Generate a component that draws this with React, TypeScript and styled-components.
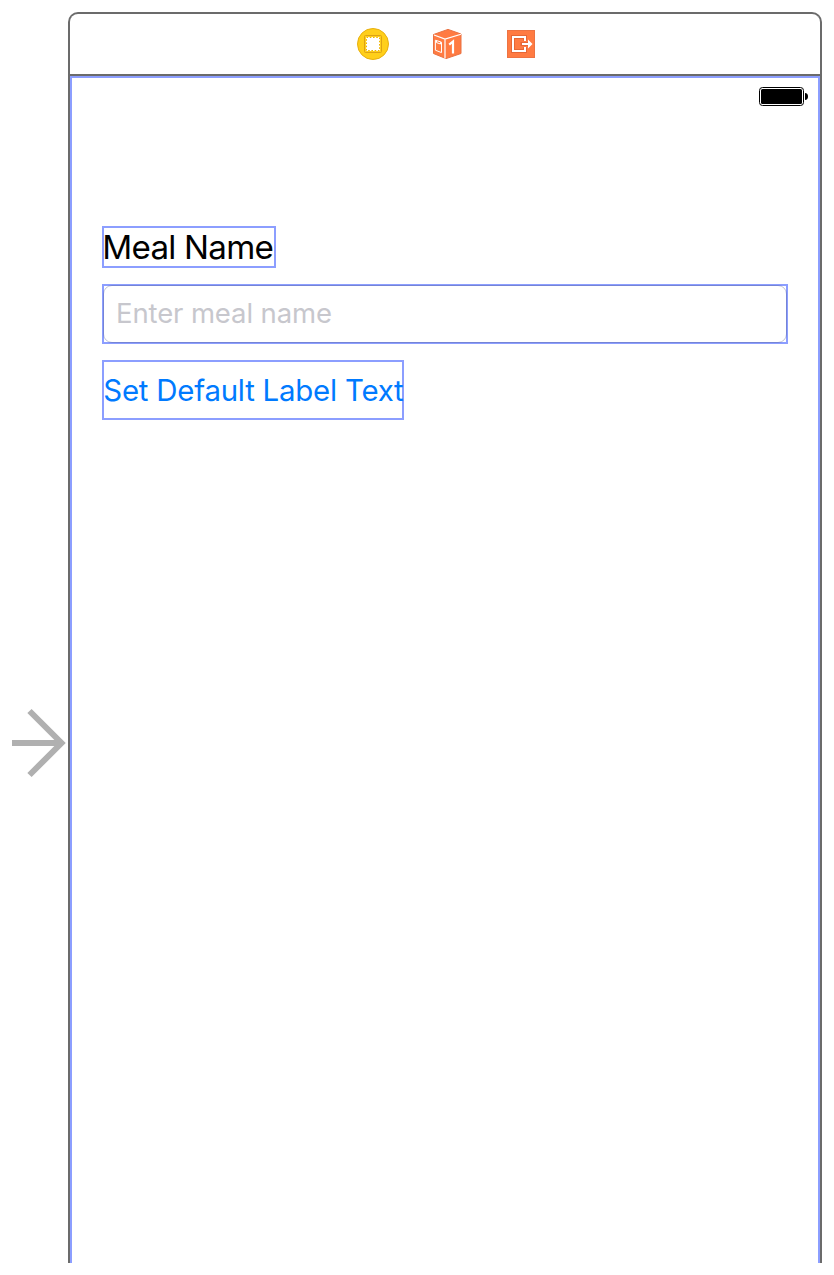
import React from "react";
import styled, { createGlobalStyle } from "styled-components";

const GlobalStyle = createGlobalStyle`
  * { box-sizing: border-box; }
  body { margin: 0; background: #fff; }
`;

const Canvas = styled.main`
  display: flex;
  width: 834px;
  height: 1275px;
  padding: 12px 12px 12px 0;
  background: #fff;
  font-family: Inter, "Liberation Sans", sans-serif;
  overflow: hidden;
`;

const EntryGutter = styled.div`
  width: 68px;
  padding: 696px 0 0 10px;
  svg { display: block; }
`;

const Scene = styled.section`
  display: flex;
  flex-direction: column;
  width: 754px;
  height: 1251px;
  border: 2px solid #6b6b6b;
  border-bottom: 0;
  border-radius: 10px 10px 0 0;
`;

const Dock = styled.header`
  display: flex;
  justify-content: center;
  gap: 38px;
  height: 62px;
  padding: 12px 0 0 4px;
  border-bottom: 2px solid #6b6b6b;
`;

const DockIcon = styled.svg`
  width: 36px;
  height: 36px;
`;

const ViewArea = styled.div`
  flex: 1;
  border: 2px solid #8c9eff;
  border-bottom: 0;
`;

const StatusBar = styled.div`
  display: flex;
  justify-content: flex-end;
  height: 40px;
  padding: 9px 10px 0 0;
`;

const Form = styled.div`
  display: flex;
  flex-direction: column;
  align-items: flex-start;
  gap: 16px;
  padding: 108px 30px 0;
`;

const Outlined = styled.div`
  border: 2px solid #8c9eff;
  white-space: nowrap;
`;

const MealLabel = styled(Outlined)`
  width: 174px;
  height: 42px;
  font-size: 33.2px;
  line-height: 39px;
  letter-spacing: -0.77px;
  text-indent: -1.7px;
  color: #000;
`;

const FieldOutline = styled(Outlined)`
  position: relative;
  width: 686px;
  height: 60px;
  &::after {
    content: "";
    position: absolute;
    inset: -1px;
    border: 1px solid rgba(70, 80, 130, 0.33);
    border-radius: 9px;
    pointer-events: none;
  }
`;

const MealInput = styled.input`
  display: block;
  width: 100%;
  height: 53px;
  padding: 0 12px;
  border: 0;
  outline: 0;
  background: transparent;
  font: 400 27.5px Inter, "Liberation Sans", sans-serif;
  letter-spacing: -0.12px;
  &::placeholder { color: #c7c7cd; opacity: 1; }
`;

const DefaultButton = styled.button`
  width: 302px;
  height: 60px;
  padding: 2px 0 0;
  border: 2px solid #8c9eff;
  background: transparent;
  font: 400 29.4px/54px Inter, "Liberation Sans", sans-serif;
  letter-spacing: -0.22px;
  text-indent: -0.7px;
  text-align: left;
  white-space: nowrap;
  color: #007aff;
`;

const EntryArrow = () => (
  <svg width="58" height="72" viewBox="10 708 58 72" fill="none" stroke="#b0b0b0" strokeWidth="6">
    <path d="M12 743H61M29.5 711L61.5 743L29.5 775" />
  </svg>
);

const ControllerIcon = () => (
  <DockIcon viewBox="355 26 36 36">
    <circle cx="373" cy="44" r="15.5" fill="#ffcf1a" stroke="#e8b010" />
    <rect x="364.5" y="35.5" width="17" height="17" rx="1" fill="#ffcf1a" stroke="#dda215" />
    <rect x="366" y="37" width="14" height="14" fill="#fff" />
    <rect x="366.5" y="37.5" width="13" height="13" fill="none" stroke="#efb400" strokeDasharray="1.6 1.65" />
  </DockIcon>
);

const ResponderIcon = () => (
  <DockIcon viewBox="429 26 36 36">
    <path d="M433.5 34.5L448 29.4L461 34V53.5L446 58.6L433.5 53.5Z" fill="#ff7b42" stroke="#e97040" strokeLinejoin="round" />
    <path d="M434 35L445 39.1L461 34.3M445 39.1V58.5" fill="none" stroke="#fff" strokeWidth="1.2" />
    <path d="M435.4 40.2L441.5 42.2V52.6L435.4 50.2ZM436.5 40.7V42.6L440.5 44V42.1" fill="none" stroke="#fff" />
    <path d="M449.2 44.7L453 41.5V53.5" fill="none" stroke="#fff" strokeWidth="2.2" />
  </DockIcon>
);

const ExitIcon = () => (
  <DockIcon viewBox="503 26 36 36">
    <rect x="507.5" y="30.5" width="27" height="27" fill="#ff7b42" stroke="#ed7342" />
    <path d="M525 40.5V37H513V51H525V47.5" fill="none" stroke="#e66736" strokeWidth="4" />
    <path d="M520.5 44H529" fill="none" stroke="#e66736" strokeWidth="4" />
    <path d="M525 41V37H513V51H525V47" fill="none" stroke="#fff" strokeWidth="2" />
    <path d="M522 43H528V39.5L532.5 44L528 48.5V45H522Z" fill="#fff" />
  </DockIcon>
);

const Battery = () => (
  <svg width="49" height="19" viewBox="0 0 49 19">
    <rect x="0.5" y="0.5" width="44" height="18" rx="3" fill="none" stroke="#000" />
    <rect x="2" y="2" width="41" height="15" rx="1.5" />
    <path d="M46 6C48 6 49 7.5 49 9.5S48 13 46 13Z" />
  </svg>
);

export default function App() {
  return (
    <>
      <GlobalStyle />
      <Canvas>
        <EntryGutter><EntryArrow /></EntryGutter>
        <Scene>
          <Dock>
            <ControllerIcon />
            <ResponderIcon />
            <ExitIcon />
          </Dock>
          <ViewArea>
            <StatusBar><Battery /></StatusBar>
            <Form>
              <MealLabel>Meal Name</MealLabel>
              <FieldOutline>
                <MealInput placeholder="Enter meal name" aria-label="Meal Name" />
              </FieldOutline>
              <DefaultButton>Set Default Label Text</DefaultButton>
            </Form>
          </ViewArea>
        </Scene>
      </Canvas>
    </>
  );
}
